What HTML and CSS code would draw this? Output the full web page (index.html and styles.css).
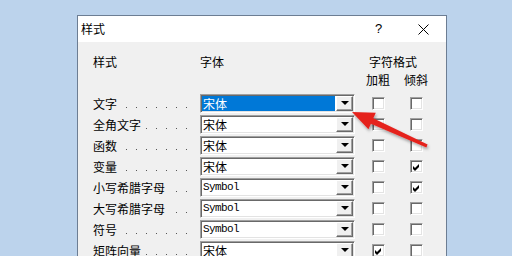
FILE: index.html
```html
<!DOCTYPE html>
<html lang="zh-CN">
<head>
<meta charset="UTF-8">
<title>样式</title>
<link rel="stylesheet" href="styles.css">
</head>
<body>
<div class="dialog">
  <div class="titlebar">
    <span class="title">样式</span>
    <span class="tb-btn">?</span>
    <span class="tb-btn">
      <svg width="11" height="11" viewBox="0 0 11 11"><path d="M0.5 0.5 L10.5 10.5 M10.5 0.5 L0.5 10.5" stroke="#000" stroke-width="1"/></svg>
    </span>
  </div>

  <div class="content">
    <div class="head">样式</div>
    <div class="head">字体</div>
    <div class="head span2">字符格式</div>
    <div></div>
    <div></div>
    <div class="head sub">加粗</div>
    <div class="head sub">倾斜</div>

    <div class="label"><span>文字</span><span class="dots"></span></div>
    <div class="combo"><span class="value selected">宋体</span><span class="arrow"></span></div>
    <div class="cell"><span class="check"></span></div>
    <div class="cell"><span class="check"></span></div>

    <div class="label"><span>全角文字</span><span class="dots"></span></div>
    <div class="combo"><span class="value">宋体</span><span class="arrow"></span></div>
    <div class="cell"><span class="check"></span></div>
    <div class="cell"><span class="check"></span></div>

    <div class="label"><span>函数</span><span class="dots"></span></div>
    <div class="combo"><span class="value">宋体</span><span class="arrow"></span></div>
    <div class="cell"><span class="check"></span></div>
    <div class="cell"><span class="check"></span></div>

    <div class="label"><span>变量</span><span class="dots"></span></div>
    <div class="combo"><span class="value">宋体</span><span class="arrow"></span></div>
    <div class="cell"><span class="check"></span></div>
    <div class="cell"><span class="check on"><svg width="7" height="7" viewBox="0 0 7 7"><polygon points="0,2 2,4 6,0 6,3 2,7 0,5" fill="#000"/></svg></span></div>

    <div class="label"><span>小写希腊字母</span><span class="dots"></span></div>
    <div class="combo"><span class="value mono">Symbol</span><span class="arrow"></span></div>
    <div class="cell"><span class="check"></span></div>
    <div class="cell"><span class="check on"><svg width="7" height="7" viewBox="0 0 7 7"><polygon points="0,2 2,4 6,0 6,3 2,7 0,5" fill="#000"/></svg></span></div>

    <div class="label"><span>大写希腊字母</span><span class="dots"></span></div>
    <div class="combo"><span class="value mono">Symbol</span><span class="arrow"></span></div>
    <div class="cell"><span class="check"></span></div>
    <div class="cell"><span class="check"></span></div>

    <div class="label"><span>符号</span><span class="dots"></span></div>
    <div class="combo"><span class="value mono">Symbol</span><span class="arrow"></span></div>
    <div class="cell"><span class="check"></span></div>
    <div class="cell"><span class="check"></span></div>

    <div class="label"><span>矩阵向量</span><span class="dots"></span></div>
    <div class="combo"><span class="value">宋体</span><span class="arrow"></span></div>
    <div class="cell"><span class="check on"><svg width="7" height="7" viewBox="0 0 7 7"><polygon points="0,2 2,4 6,0 6,3 2,7 0,5" fill="#000"/></svg></span></div>
    <div class="cell"><span class="check"></span></div>
  </div>
</div>

<!-- annotation arrow drawn over the dialog -->
<svg class="annot" width="512" height="256" viewBox="0 0 512 256">
  <defs>
    <filter id="shadow" x="-20%" y="-20%" width="140%" height="160%">
      <feDropShadow dx="1" dy="2" stdDeviation="1.5" flood-color="#000" flood-opacity="0.35"/>
    </filter>
  </defs>
  <polygon points="352,112 375.8,112.8 373.3,118.3 427.6,144.6 426.4,147.4 370.9,123.7 368.4,129.2" fill="#e5241f" filter="url(#shadow)"/>
</svg>
</body>
</html>
```

FILE: styles.css
```css
body {
  margin: 0;
  width: 512px;
  height: 256px;
  overflow: hidden;
  position: relative;
  background: #bcd3ec;
  font-family: "Noto Sans CJK SC", sans-serif;
  font-size: 12px;
  line-height: 16px;
  color: #000;
}

.dialog {
  margin: 15px 0 0 77px;
  width: 368px;
  height: 260px;
  border: 1px solid #6c7d93;
  background: #f0f0f0;
}

.titlebar {
  height: 26px;
  background: #fff;
  display: flex;
  align-items: center;
  padding-left: 3px;
}

.title {
  flex: 1;
}

.tb-btn {
  width: 45px;
  height: 26px;
  display: flex;
  align-items: center;
  justify-content: center;
  font-family: "Liberation Sans", sans-serif;
  font-size: 13px;
}

.content {
  display: grid;
  grid-template-columns: 107px 155px 46px 30px;
  grid-template-rows: 16px 20px repeat(8, 19px);
  row-gap: 2px;
  align-items: center;
  padding: 12px 0 0 15px;
}

.head {
  white-space: nowrap;
}

.span2 {
  grid-column: 3 / 5;
  text-align: center;
}

.sub {
  text-align: center;
  align-self: start;
}

.label {
  display: flex;
  height: 19px;
  align-items: center;
  padding-right: 13px;
  white-space: nowrap;
}

/* dot leaders: one grey pixel every 10px, lined up from the right */
.dots {
  flex: 1;
  align-self: stretch;
  margin-left: 3px;
  background-image: linear-gradient(to right, transparent 9px, #555 9px);
  background-size: 10px 1px;
  background-repeat: repeat-x;
  background-position: right 0 bottom 5px;
}

.combo {
  height: 19px;
  box-sizing: border-box;
  display: flex;
  background: #fff;
  border-top: 1px solid #a0a0a0;
  border-left: 1px solid #a0a0a0;
  border-right: 1px solid #fff;
  border-bottom: 1px solid #fff;
  box-shadow: inset 1px 1px 0 #696969, inset -1px -1px 0 #e3e3e3;
  padding: 1px;
}

.value {
  flex: 1;
  padding-left: 1px;
  line-height: 15px;
  margin-right: 1px;
}

.value.selected {
  background: #0078d7;
  color: #fff;
}

.mono {
  font-family: "Liberation Mono", monospace;
  font-size: 11px;
  letter-spacing: -0.6px;
}

.arrow {
  width: 17px;
  box-sizing: border-box;
  background: #f0f0f0;
  border-top: 1px solid #fff;
  border-left: 1px solid #fff;
  border-right: 1px solid #696969;
  border-bottom: 1px solid #696969;
  box-shadow: inset -1px -1px 0 #a0a0a0;
  display: flex;
  align-items: center;
  justify-content: center;
}

.arrow::after {
  content: "";
  border-left: 4px solid transparent;
  border-right: 4px solid transparent;
  border-top: 4px solid #000;
  margin-bottom: 1px;
}

.cell {
  display: flex;
  justify-content: center;
}

.check {
  width: 13px;
  height: 13px;
  box-sizing: border-box;
  background: #fff;
  border-top: 1px solid #a0a0a0;
  border-left: 1px solid #a0a0a0;
  border-right: 1px solid #fff;
  border-bottom: 1px solid #fff;
  box-shadow: inset 1px 1px 0 #696969, inset -1px -1px 0 #e3e3e3;
  display: flex;
  align-items: center;
  justify-content: center;
}

.check svg {
  margin: 1px 0 0 1px;
}

.annot {
  position: absolute;
  left: 0;
  top: 0;
  pointer-events: none;
}
```
